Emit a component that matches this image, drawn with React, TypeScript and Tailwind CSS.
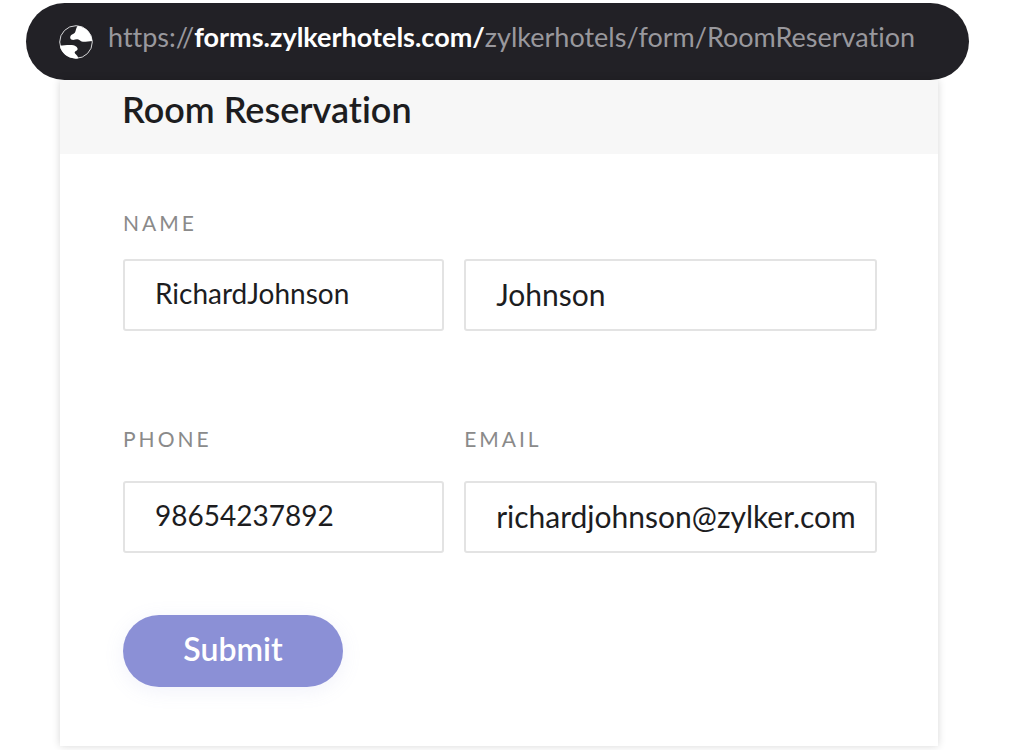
import { InputHTMLAttributes, useState } from "react";
import clsx from "clsx";

const GlobeIcon: React.FC<{ className?: string }> = ({ className }) => {
  return (
    <svg viewBox="0 0 34 34" className={className} aria-hidden="true">
      <circle cx="17" cy="17" r="16.3" fill="#222126" stroke="#d6d6d8" strokeWidth="1" />
      <path
        fill="#fff"
        d="M18.8 0.8 C26 2 32.5 7.5 33.3 16 L26.5 16.8 C24.5 16.8 23 16.6 22 16.2 C20.6 15.3 20 14.2 18 14.3 C16.5 14.5 14.6 15.2 13 14.8 C11.2 14.2 10.8 12.8 11.5 11 C12 9.2 15 9 16 7.5 C17 5.8 16.8 3 18.8 0.8 Z"
      />
      <path
        fill="#fff"
        d="M0.9 20.6 C4 20.6 7 20 11 20 C13.5 20 15.8 20.3 17 21.4 C18.4 22.4 18.9 23.6 18.4 24.8 C17.8 25.9 16 26 15.7 27.2 C15.5 28.8 17.8 29.6 18.4 31 C18.9 32 19 32.6 19.4 33.2 C10 34.6 2.2 29 0.9 20.6 Z"
      />
    </svg>
  );
};

const Field: React.FC<
  { large?: boolean } & InputHTMLAttributes<HTMLInputElement>
> = ({ large, className, ...rest }) => {
  return (
    <input
      className={clsx(
        "h-[72px] w-full min-w-0 rounded-[3px] border-2 border-[#e3e3e3] bg-white pl-[30px] text-[#1d1d1f] outline-none focus:border-[#8b90d6]",
        large ? "pb-0.5 text-[30px]" : "pb-1 text-[28px]",
        className
      )}
      {...rest}
    />
  );
};

const labelClasses = "block text-[21px] leading-7 tracking-[3px] text-[#8a8a8a]";

const AddressBar = () => {
  return (
    <header className="ml-[26px] mr-[49px] flex h-[77px] items-center rounded-full bg-[#222126] pl-[33px] text-[27px]">
      <GlobeIcon className="mr-[15px] size-[34px] shrink-0" />
      <p className="pb-2 whitespace-nowrap text-[#99989d]">
        https://<b className="font-bold text-white">forms.zylkerhotels.com/</b>
        zylkerhotels/form/RoomReservation
      </p>
    </header>
  );
};

export default function App() {
  const [values, setValues] = useState({
    first: "RichardJohnson",
    last: "Johnson",
    phone: "98654237892",
    email: "richardjohnson@zylker.com",
  });

  const onChange = (e: React.ChangeEvent<HTMLInputElement>) => {
    setValues({ ...values, [e.target.name]: e.target.value });
  };

  return (
    <div className="overflow-x-hidden bg-white pt-[3px] pb-1 font-['Lato',sans-serif] [font-variant-ligatures:none]">
      <AddressBar />

      <main className="ml-[60px] mr-20 bg-white shadow-[0_0_8px_rgba(0,0,0,0.16)]">
        <div className="bg-[#f7f7f7] px-[62px] pt-[7px] pb-[23px]">
          <h1 className="text-[36px] leading-[44px] font-semibold text-[#1d1d1f]">
            Room Reservation
          </h1>
        </div>

        <form
          className="pt-[55px] pr-[61px] pb-[59px] pl-[63px]"
          onSubmit={(e) => e.preventDefault()}
        >
          <label htmlFor="first" className={labelClasses}>
            NAME
          </label>
          <div className="mt-[22px] grid grid-cols-[7fr_9fr] gap-5">
            <Field id="first" name="first" value={values.first} onChange={onChange} />
            <Field
              large
              name="last"
              aria-label="Last name"
              value={values.last}
              onChange={onChange}
            />
          </div>

          <div className="mt-[94px] grid grid-cols-[7fr_9fr] gap-5">
            <div>
              <label htmlFor="phone" className={labelClasses}>
                PHONE
              </label>
              <Field
                id="phone"
                name="phone"
                className="mt-7"
                value={values.phone}
                onChange={onChange}
              />
            </div>
            <div>
              <label htmlFor="email" className={labelClasses}>
                EMAIL
              </label>
              <Field
                large
                id="email"
                name="email"
                className="mt-7"
                value={values.email}
                onChange={onChange}
              />
            </div>
          </div>

          <button
            type="submit"
            className="mt-[62px] h-[72px] w-[220px] rounded-full bg-[#8b90d6] pb-1 text-[32px] font-semibold text-white shadow-[0_4px_20px_rgba(139,144,214,0.12)] hover:bg-[#7c82cf]"
          >
            Submit
          </button>
        </form>
      </main>
    </div>
  );
}
